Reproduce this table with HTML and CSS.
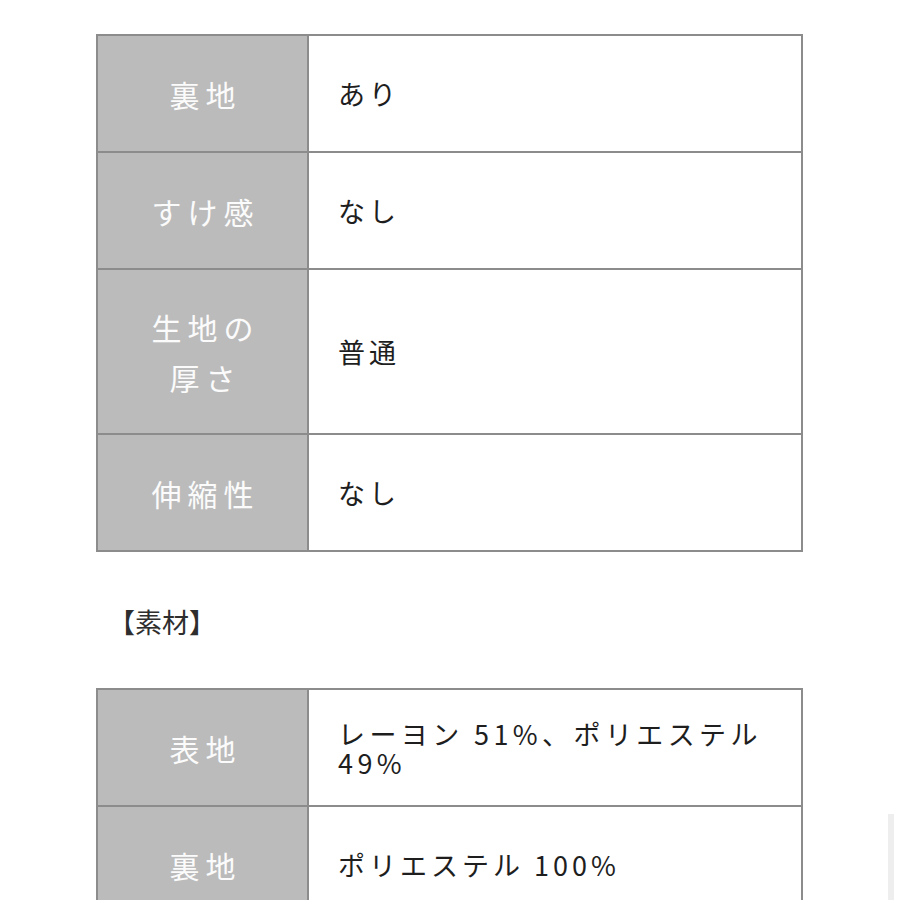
FILE: index.html
```html
<!DOCTYPE html>
<html lang="ja">
<head>
<meta charset="utf-8">
<link rel="stylesheet" href="styles.css">
</head>
<body>
<div class="page">
  <table class="spec">
    <tr class="r1"><th>裏地</th><td>あり</td></tr>
    <tr class="r1"><th>すけ感</th><td>なし</td></tr>
    <tr class="r2"><th>生地の<br>厚さ</th><td>普通</td></tr>
    <tr class="r1"><th>伸縮性</th><td>なし</td></tr>
  </table>
  <p class="heading">【素材】</p>
  <table class="spec">
    <tr class="r1"><th>表地</th><td class="wrap">レーヨン 51%、ポリエステル 49%</td></tr>
    <tr class="r1"><th>裏地</th><td>ポリエステル 100%</td></tr>
  </table>
</div>
<div class="scroll"></div>
</body>
</html>
```
FILE: styles.css
```css
html, body {
  margin: 0;
  padding: 0;
  background: #ffffff;
}
body {
  font-family: "Noto Sans CJK JP", "Noto Sans", sans-serif;
  overflow: hidden;
  height: 900px;
}
.page {
  padding: 34px 0 0 96px;
}
.spec {
  border-collapse: collapse;
  width: 707px;
  table-layout: fixed;
}
.spec th, .spec td {
  border: 2px solid #8c8c8c;
}
.spec th {
  width: 203px;
  background: #bbbbbb;
  color: #fbfbfb;
  font-weight: 400;
  font-size: 30px;
  letter-spacing: 6px;
  line-height: 50px;
  padding: 0 0 0 6px;
  text-align: center;
}
.spec td {
  background: #ffffff;
  color: #1e1e1e;
  font-size: 27px;
  letter-spacing: 4px;
  line-height: 29px;
  padding: 0 20px 0 29px;
  text-align: left;
}
.spec .wrap {
  letter-spacing: 4.4px;
  padding-bottom: 0;
}
.r1 { height: 117px; }
.r2 { height: 165px; }
.heading {
  margin: 51px 0 47px 12px;
  font-size: 27px;
  line-height: 38px;
  color: #2e2e2e;
  letter-spacing: 0;
}
.scroll {
  position: absolute;
  right: 6px;
  top: 814px;
  width: 6px;
  height: 100px;
  background: #eeeeee;
}
```
